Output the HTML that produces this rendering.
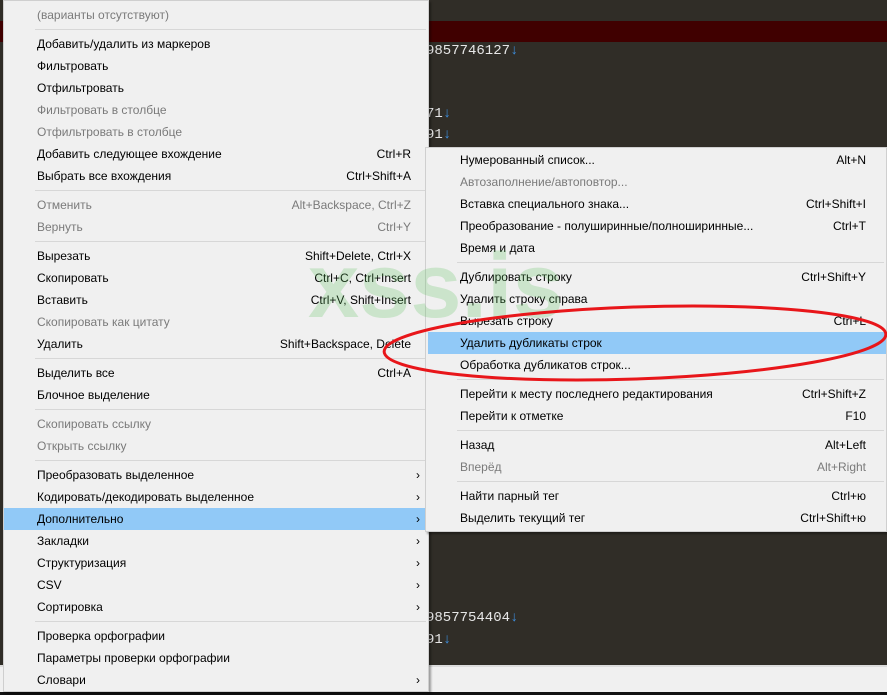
<!DOCTYPE html>
<html><head><meta charset="utf-8"><style>
*{margin:0;padding:0;box-sizing:border-box}
body{width:887px;height:695px;overflow:hidden;background:#302d27;position:relative;font-family:"Liberation Sans","DejaVu Sans",sans-serif;font-size:12px;color:#000}
.ed{position:absolute;font-family:"Liberation Mono","DejaVu Sans Mono",monospace;font-size:14px;color:#e6e6e6;left:426px}
.ed b{color:#3d8fe0;font-weight:normal}
.menu{position:absolute;background:#f0f0f0;border:1px solid #cfcfcf;box-shadow:2px 2px 2px rgba(0,0,0,.35)}
.it{position:absolute;left:0;right:0;height:22px;line-height:22px;margin-top:-1px}
.it .t{position:absolute;left:33px}
.it .k{position:absolute;right:17px}
.it .a{position:absolute;right:8px;font-size:12px}
.d{color:#7a7a7a}
.hl{background:#91c9f7}
.sep{position:absolute;left:31px;right:2px;height:1px;background:#d7d7d7;margin-top:-1px}
#sub .it .t{left:34px}
#sub .it .k{right:20px}
</style></head><body>
<div style="position:absolute;left:0;top:21px;width:887px;height:21px;background:#400000"></div>
<div class="ed" style="top:43px">9857746127<b>↓</b></div>
<div class="ed" style="top:106px">71<b>↓</b></div>
<div class="ed" style="top:127px">91<b>↓</b></div>
<div class="ed" style="top:610px">9857754404<b>↓</b></div>
<div class="ed" style="top:632px">91<b>↓</b></div>
<div style="position:absolute;left:0;top:665px;width:887px;height:27px;background:#f0f0f0;border-top:2px solid #dcdcdc"></div>
<div style="position:absolute;left:0;top:692px;width:887px;height:3px;background:#111"></div>

<div class="menu" style="left:3px;top:0;width:426px;height:692px">
<div class="it d" style="top:4px"><span class="t">(варианты отсутствуют)</span></div>
<div class="sep" style="top:29px"></div>
<div class="it" style="top:33px"><span class="t">Добавить/удалить из маркеров</span></div>
<div class="it" style="top:55px"><span class="t">Фильтровать</span></div>
<div class="it" style="top:77px"><span class="t">Отфильтровать</span></div>
<div class="it d" style="top:99px"><span class="t">Фильтровать в столбце</span></div>
<div class="it d" style="top:121px"><span class="t">Отфильтровать в столбце</span></div>
<div class="it" style="top:143px"><span class="t">Добавить следующее вхождение</span><span class="k">Ctrl+R</span></div>
<div class="it" style="top:165px"><span class="t">Выбрать все вхождения</span><span class="k">Ctrl+Shift+A</span></div>
<div class="sep" style="top:190px"></div>
<div class="it d" style="top:194px"><span class="t">Отменить</span><span class="k">Alt+Backspace, Ctrl+Z</span></div>
<div class="it d" style="top:216px"><span class="t">Вернуть</span><span class="k">Ctrl+Y</span></div>
<div class="sep" style="top:241px"></div>
<div class="it" style="top:245px"><span class="t">Вырезать</span><span class="k">Shift+Delete, Ctrl+X</span></div>
<div class="it" style="top:267px"><span class="t">Скопировать</span><span class="k">Ctrl+C, Ctrl+Insert</span></div>
<div class="it" style="top:289px"><span class="t">Вставить</span><span class="k">Ctrl+V, Shift+Insert</span></div>
<div class="it d" style="top:311px"><span class="t">Скопировать как цитату</span></div>
<div class="it" style="top:333px"><span class="t">Удалить</span><span class="k">Shift+Backspace, Delete</span></div>
<div class="sep" style="top:358px"></div>
<div class="it" style="top:362px"><span class="t">Выделить все</span><span class="k">Ctrl+A</span></div>
<div class="it" style="top:384px"><span class="t">Блочное выделение</span></div>
<div class="sep" style="top:409px"></div>
<div class="it d" style="top:413px"><span class="t">Скопировать ссылку</span></div>
<div class="it d" style="top:435px"><span class="t">Открыть ссылку</span></div>
<div class="sep" style="top:460px"></div>
<div class="it" style="top:464px"><span class="t">Преобразовать выделенное</span><span class="a">›</span></div>
<div class="it" style="top:486px"><span class="t">Кодировать/декодировать выделенное</span><span class="a">›</span></div>
<div class="it hl" style="top:508px;left:0;right:3px"><span class="t">Дополнительно</span><span class="a" style="right:5px">›</span></div>
<div class="it" style="top:530px"><span class="t">Закладки</span><span class="a">›</span></div>
<div class="it" style="top:552px"><span class="t">Структуризация</span><span class="a">›</span></div>
<div class="it" style="top:574px"><span class="t">CSV</span><span class="a">›</span></div>
<div class="it" style="top:596px"><span class="t">Сортировка</span><span class="a">›</span></div>
<div class="sep" style="top:621px"></div>
<div class="it" style="top:625px"><span class="t">Проверка орфографии</span></div>
<div class="it" style="top:647px"><span class="t">Параметры проверки орфографии</span></div>
<div class="it" style="top:669px"><span class="t">Словари</span><span class="a">›</span></div>
</div>

<div class="menu" id="sub" style="left:425px;top:147px;width:462px;height:385px">
<div class="it" style="top:2px"><span class="t">Нумерованный список...</span><span class="k">Alt+N</span></div>
<div class="it d" style="top:24px"><span class="t">Автозаполнение/автоповтор...</span></div>
<div class="it" style="top:46px"><span class="t">Вставка специального знака...</span><span class="k">Ctrl+Shift+I</span></div>
<div class="it" style="top:68px"><span class="t">Преобразование - полуширинные/полноширинные...</span><span class="k">Ctrl+T</span></div>
<div class="it" style="top:90px"><span class="t">Время и дата</span></div>
<div class="sep" style="top:115px"></div>
<div class="it" style="top:119px"><span class="t">Дублировать строку</span><span class="k">Ctrl+Shift+Y</span></div>
<div class="it" style="top:141px"><span class="t">Удалить строку справа</span></div>
<div class="it" style="top:163px"><span class="t">Вырезать строку</span><span class="k">Ctrl+L</span></div>
<div class="it hl" style="top:185px;left:2px"><span class="t" style="left:32px">Удалить дубликаты строк</span></div>
<div class="it" style="top:207px"><span class="t">Обработка дубликатов строк...</span></div>
<div class="sep" style="top:232px"></div>
<div class="it" style="top:236px"><span class="t">Перейти к месту последнего редактирования</span><span class="k">Ctrl+Shift+Z</span></div>
<div class="it" style="top:258px"><span class="t">Перейти к отметке</span><span class="k">F10</span></div>
<div class="sep" style="top:283px"></div>
<div class="it" style="top:287px"><span class="t">Назад</span><span class="k">Alt+Left</span></div>
<div class="it d" style="top:309px"><span class="t">Вперёд</span><span class="k">Alt+Right</span></div>
<div class="sep" style="top:334px"></div>
<div class="it" style="top:338px"><span class="t">Найти парный тег</span><span class="k">Ctrl+ю</span></div>
<div class="it" style="top:360px"><span class="t">Выделить текущий тег</span><span class="k">Ctrl+Shift+ю</span></div>
</div>

<svg width="887" height="695" style="position:absolute;left:0;top:0">
<text x="308" y="317" font-family="Liberation Sans,sans-serif" font-weight="bold" font-size="92" fill="rgba(90,190,90,0.25)">xss.is</text>
<ellipse cx="635" cy="343" rx="251" ry="36" transform="rotate(-2 635 343)" fill="none" stroke="#e8161a" stroke-width="3"/>
</svg>
</body></html>
